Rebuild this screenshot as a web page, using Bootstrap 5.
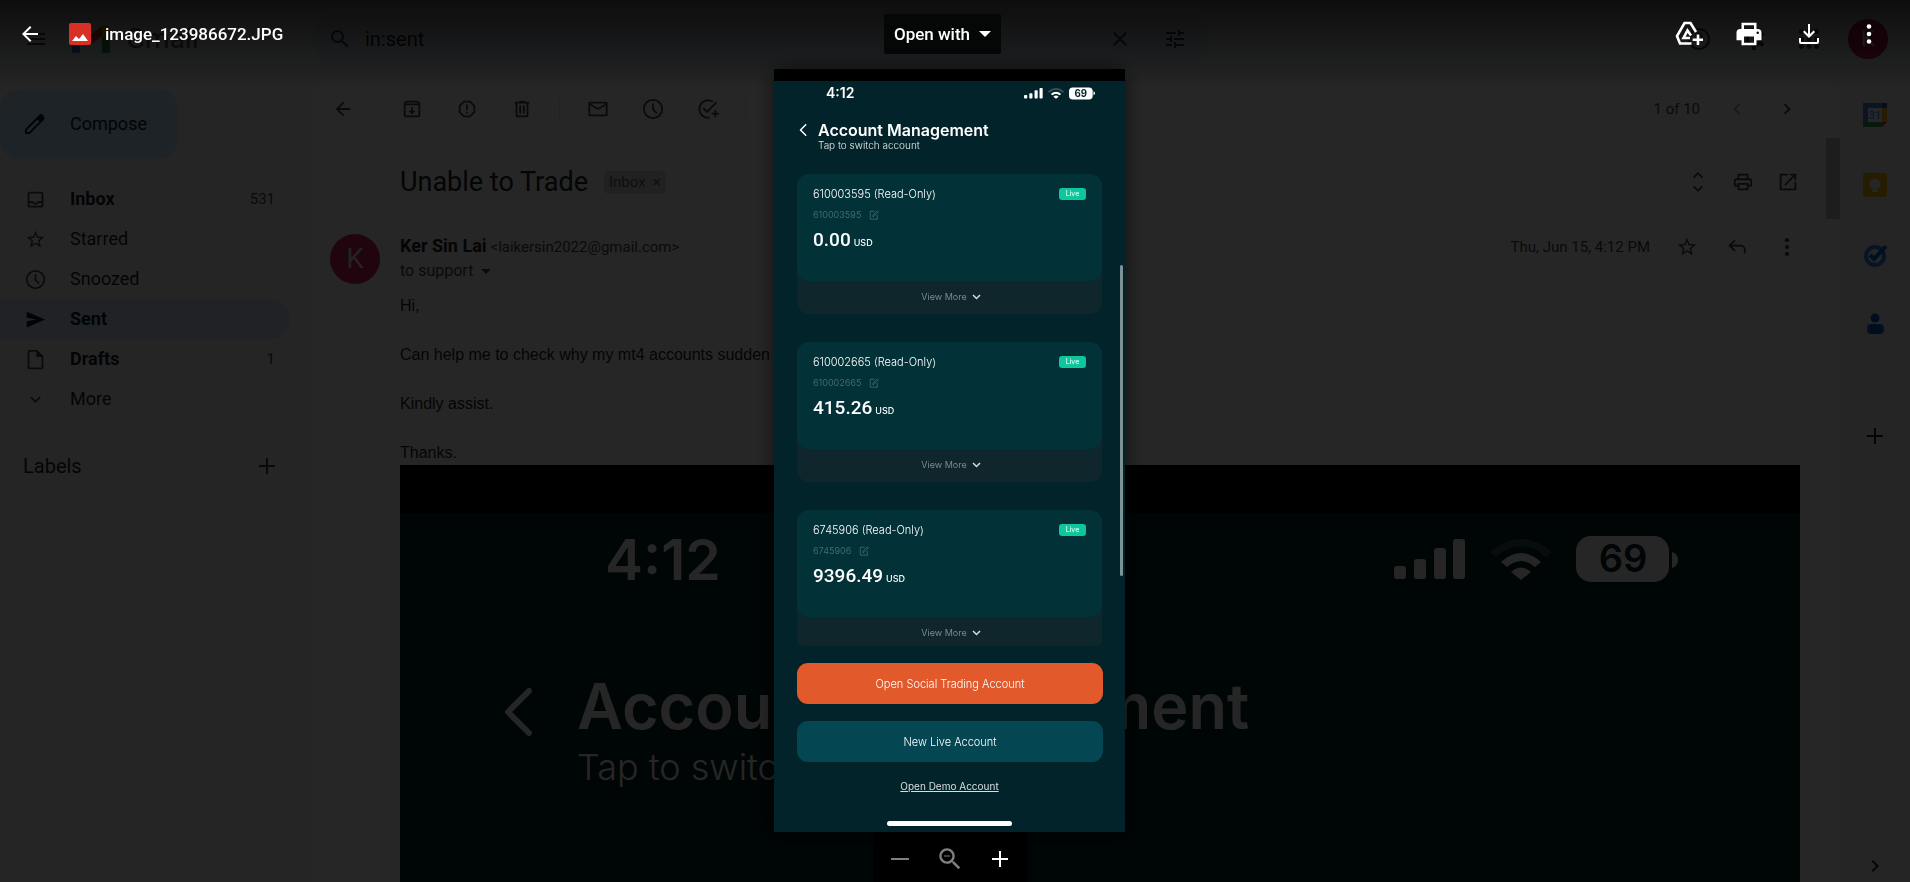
<!DOCTYPE html>
<html lang="en">
<head>
<meta charset="utf-8">
<meta name="viewport" content="width=device-width, initial-scale=1">
<title>image_123986672.JPG</title>
<link href="https://cdn.jsdelivr.net/npm/bootstrap@5.3.0/dist/css/bootstrap.min.css" rel="stylesheet">
<style>
  html, body { height: 100%; }
  body { overflow: hidden; background: #f6f8fc; color: #202124; font: 16px/24px Roboto, "Liberation Sans", sans-serif; }
  button { background: none; border: 0; padding: 0; color: inherit; font: inherit; }
  .ic { width: 24px; height: 24px; fill: currentColor; flex: none; display: block; }
  .slot { width: 55px; display: flex; justify-content: center; flex: none; }
  .slot-sm { width: 45px; }
  .slot-md { width: 50px; }
  .slot-lg { width: 60px; }
  .muted-ink { color: #444746; }

  /* mail page */
  .mail { height: 100vh; }
  .mail-head { height: 78px; flex: none; }
  .head-tools { padding-right: 22px; }
  .side-col { width: 313px; flex: none; }
  .logo-word { font-size: 28px; color: #5f6368; }
  .searchbar { height: 60px; width: 897px; border-radius: 30px; background: #eaf1fb; padding-left: 15px; gap: 13px; }
  .searchbar input { background: none; border: 0; font-size: 20px; color: #1f1f1f; padding: 0; min-width: 0; }
  .search-tools { display: flex; margin-right: 8px; }
  .face { border-radius: 50%; background: #d81b60; color: #fff; display: flex; align-items: center; justify-content: center; flex: none; }
  .face-sm { width: 40px; height: 40px; font-size: 22px; margin-left: 12px; }
  .face-lg { width: 50px; height: 50px; font-size: 28px; color: #e8e8e8; margin: 0 20px 0 17px; }
  .compose { width: 178px; height: 70px; border-radius: 20px; background: #c2e7ff; color: #001d35; font-size: 18px; padding-left: 23px; gap: 23px; margin: 11px 0 20px; }
  .folder { height: 40px; width: 290px; padding: 0 15px 0 25px; font-size: 18px; color: #1f1f1f; text-decoration: none; border-radius: 0 20px 20px 0; gap: 24px; }
  .folder .ic { width: 21px; height: 21px; color: #444746; }
  .folder .count { font-size: 15px; font-weight: 400; color: #444746; }
  .folder.on { background: #d3e3fd; color: #001d35; }
  .folder.on .ic { color: #001d35; }
  .labels { font-size: 20px; padding: 0 34px 0 23px; margin-top: 35px; height: 24px; }
  .thread { background: #fff; border-radius: 20px 20px 0 0; margin-top: 2px; overflow: hidden; }
  .thread .ic { width: 22px; height: 22px; }
  .bar { height: 58px; flex: none; padding: 0 28px 0 2px; }
  .bar .slot:first-child { margin-right: 14px; }
  .bar .rule { width: 1px; height: 25px; background: #e0e0e0; flex: none; margin: 0 10px; }
  .of-count { font-size: 15px; margin-right: 12px; }
  .thread-scroll { padding-right: 14px; }
  .thumb { width: 14px; height: 81px; background: #c1c1c1; flex: none; }
  .subject-row { padding: 26px 2px 34px 87px; gap: 16px; }
  .subject { font-size: 27px; line-height: 36px; margin: 0; font-weight: 400; }
  .chip { background: #ddd; border-radius: 5px; font-size: 15px; line-height: 23px; padding: 0 5px; color: #666; display: flex; gap: 7px; }
  .from-name { font-size: 18px; }
  .from-mail { font-size: 15px; }
  .sent-date { font-size: 15px; margin-right: 12px; }
  .letter { font: 16px/24px "Liberation Sans", Arial, sans-serif; color: #222; padding-top: 11px; }
  .letter p { margin: 0 0 25px; }
  .shot { background: #02232a; margin-right: 12px; color: #fff; font-family: Inter, sans-serif; font-weight: 600; padding-bottom: 300px; }
  .shot-strip { height: 48px; background: #000; }
  .shot-status { height: 93px; padding: 0 122px 0 205px; font-size: 57px; }
  .shot-chev { margin: 82px 0 0 104px; }
  .shot-title { font-size: 63px; line-height: 70px; margin: 65px 0 4px 45px; }
  .shot-sub { font-size: 36px; line-height: 44px; font-weight: 300; margin-left: 45px; }
  .rail { width: 70px; flex: none; padding-top: 2px; }
  .rail-rule { width: 24px; height: 1px; background: #e0e0e0; margin: 12px 0 51px; }

  /* attachment viewer */
  .viewer { position: fixed; inset: 0; background: rgba(0,0,0,.85); color: #fff; }
  .viewer::before { content: ""; position: absolute; inset: 0 0 auto 0; height: 88px; background: linear-gradient(rgba(0,0,0,.65), transparent); }
  .viewer-head { height: 69px; flex: none; position: relative; z-index: 2; padding-top: 14px; }
  .viewer-side { flex: 1 1 0; height: 40px; }
  .viewer-left { padding-left: 18px; }
  .viewer-right { padding-right: 11px; }
  .file-ic { margin: 0 14px 0 27px; }
  .viewer-head .name { font-size: 17px; font-weight: 500; }
  .open-with { width: 117px; height: 40px; background: #050606; border-radius: 2px; font-size: 17px; font-weight: 500; gap: 9px; margin-right: 32px; }
  .side-pad { padding-right: 11px; }
  .zoombar { width: 154px; height: 54px; background: #000; }
  .phone { width: 351px; background: #02232a; font-family: Inter, sans-serif; box-shadow: 0 0 20px rgba(0,0,0,.6); position: relative; }
  .phone-strip { height: 12px; background: #000; }
  .status { height: 24px; padding: 0 30px 0 52px; font-size: 14px; font-weight: 600; }
  .ph-head { padding: 16px 0 0 25px; gap: 11px; }
  .ph-back { height: 18px; }
  .ph-back svg { display: block; }
  .ph-title { font-size: 16px; line-height: 18px; font-weight: 600; margin: 0; }
  .ph-sub { font-size: 10px; line-height: 12px; margin: 0; color: #e6eced; font-weight: 300; }
  .ph-body { padding: 23px 22px 0 23px; }
  .acct { background: #0f262c; border-radius: 12px; height: 140px; margin: 0 1px 28px 0; }
  .acct.cut { height: 136px; border-radius: 12px 12px 6px 6px; margin-bottom: 17px; }
  .acct-in { background: #033138; border-radius: 12px; height: 107px; padding: 12px 16px 0; }
  .acct-name { font-size: 11px; line-height: 16px; font-weight: 300; margin: 0; color: #fff; }
  .acct-id { font-size: 9px; line-height: 14px; color: #456a70; margin-top: 6px; gap: 8px; }
  .acct-amt { font: 500 19px/24px Roboto, sans-serif; margin-top: 6px; display: flex; align-items: baseline; gap: 3px; }
  .acct-amt span { font-family: Inter, sans-serif; font-size: 9px; }
  .live { background: #0fc79c; border-radius: 3px; width: 27px; height: 12px; font-size: 7px; line-height: 12px; text-align: center; }
  .more { height: 32px; width: 100%; font-size: 9px; color: #7b8a8d; gap: 5px; padding-left: 3px; }
  .ph-btn { height: 41px; border-radius: 11px; font-size: 11px; font-weight: 300; width: 306px; display: block; }
  .ph-btn.orange { background: #e2592b; }
  .ph-btn.teal { background: #044753; margin-top: 17px; }
  .demo { font-size: 10px; line-height: 14px; color: #d9dfe0; margin-top: 17px; }
  .home { width: 125px; height: 5px; border-radius: 3px; background: #fff; margin: 28px 0 6px; }
  .ph-thumb { position: absolute; right: 2px; top: 196px; width: 3px; height: 311px; border-radius: 2px; background: #7b9296; }
</style>
</head>
<body>
<svg width="0" height="0" class="position-absolute">
  <symbol id="back" viewBox="0 0 24 24"><path d="M20 11H7.830l5.590-5.590L12 4l-8 8 8 8 1.410-1.410L7.830 13H20z"/></symbol>
  <symbol id="menu" viewBox="0 0 24 24"><path d="M3 18h18v-2H3zm0-5h18v-2H3zm0-7v2h18V6z"/></symbol>
  <symbol id="search" viewBox="0 0 24 24"><path d="M15.500 14h-.79l-.28-.27A6.470 6.470 0 0 0 16 9.500 6.500 6.500 0 1 0 9.500 16c1.610 0 3.090-.59 4.230-1.570l.27.28v.79l5 4.990L20.490 19zm-6 0a4.500 4.500 0 1 1 0-9 4.500 4.500 0 0 1 0 9z"/></symbol>
  <symbol id="zoomout" viewBox="2 2 20 20"><path d="M15.500 14h-.79l-.28-.27A6.470 6.470 0 0 0 16 9.500 6.500 6.500 0 1 0 9.500 16c1.610 0 3.090-.59 4.230-1.570l.27.28v.79l5 4.990L20.490 19zm-6 0a4.500 4.500 0 1 1 0-9 4.500 4.500 0 0 1 0 9zM7 9h5v1H7z"/></symbol>
  <symbol id="close" viewBox="0 0 24 24"><path d="M19 6.410 17.590 5 12 10.590 6.410 5 5 6.410 10.590 12 5 17.590 6.410 19 12 13.410 17.590 19 19 17.590 13.410 12z"/></symbol>
  <symbol id="tune" viewBox="0 0 24 24"><path d="M3 17v2h6v-2zM3 5v2h10V5zm10 16v-2h8v-2h-8v-2h-2v6zM7 9v2H3v2h4v2h2V9zm14 4v-2H11v2zm-6-4h2V7h4V5h-4V3h-2z"/></symbol>
  <symbol id="pen" viewBox="0 0 24 24"><path d="M20.700 5.200a1 1 0 0 0 0-1.400l-1-1a2.400 2.400 0 0 0-3.300 0L2 17.200V22h4.800L21.200 7.600a2 2 0 0 0-.5-2.400zM6 20H4v-2L14.500 7.500l2 2z"/></symbol>
  <symbol id="inbox" viewBox="0 0 24 24"><path d="M19 3H5a2 2 0 0 0-2 2v14c0 1.100.9 2 2 2h14a2 2 0 0 0 2-2V5a2 2 0 0 0-2-2zm0 16H5v-3h3.560a4 4 0 0 0 6.880 0H19zm0-5h-5a2 2 0 0 1-4 0H5V5h14z"/></symbol>
  <symbol id="star" viewBox="0 0 24 24"><path d="m22 9.240-7.190-.62L12 2 9.190 8.630 2 9.240l5.460 4.730L5.820 21 12 17.270 18.180 21l-1.630-7.030zM12 15.400l-3.760 2.270 1-4.280-3.320-2.880 4.380-.38L12 6.100l1.710 4.040 4.380.38-3.320 2.880 1 4.280z"/></symbol>
  <symbol id="clock" viewBox="0 0 24 24"><path d="M12 1a11 11 0 1 0 0 22 11 11 0 0 0 0-22zm0 20a9 9 0 1 1 0-18 9 9 0 0 1 0 18zm-1-15h2v6l4 4-1.400 1.400L11 12.800z"/></symbol>
  <symbol id="send" viewBox="0 0 24 24"><path d="M2 21 23 12 2 3v7l11 2-11 2z"/></symbol>
  <symbol id="draft" viewBox="0 0 24 24"><path d="M14 1H5a2 2 0 0 0-2 2v18c0 1.100.9 2 2 2h14a2 2 0 0 0 2-2V8zm5 20H5V3h8v6h6z"/></symbol>
  <symbol id="down" viewBox="0 0 24 24"><path d="M16.590 8.590 12 13.170 7.410 8.590 6 10l6 6 6-6z"/></symbol>
  <symbol id="left" viewBox="0 0 24 24"><path d="M15.410 7.410 14 6l-6 6 6 6 1.410-1.410L10.830 12z"/></symbol>
  <symbol id="right" viewBox="0 0 24 24"><path d="M8.590 16.590 13.170 12 8.590 7.410 10 6l6 6-6 6z"/></symbol>
  <symbol id="plus" viewBox="0 0 24 24"><path d="M20 13h-7v7h-2v-7H4v-2h7V4h2v7h7z"/></symbol>
  <symbol id="minus" viewBox="0 0 24 24"><path d="M3 11h18v2H3z"/></symbol>
  <symbol id="archive" viewBox="0 0 24 24"><path d="m20.500 5.200-1.400-1.700A1.500 1.500 0 0 0 18 3H6c-.5 0-.9.200-1.200.5L3.500 5.200C3.200 5.600 3 6 3 6.500V19c0 1.100.9 2 2 2h14a2 2 0 0 0 2-2V6.500c0-.5-.2-.9-.5-1.300zM6.200 5h11.600l.8 1H5.400zM5 19V8h14v11zm8-9h-2v4H8l4 4 4-4h-3z"/></symbol>
  <symbol id="spam" viewBox="0 0 24 24"><path d="M15.700 3H8.300L3 8.300v7.400L8.300 21h7.400l5.300-5.300V8.300zM19 14.900 14.900 19H9.100L5 14.900V9.100L9.100 5h5.800L19 9.100zM11 7h2v6h-2zm0 8h2v2h-2z"/></symbol>
  <symbol id="trash" viewBox="0 0 24 24"><path d="M15 4V3H9v1H4v2h1v13c0 1.100.9 2 2 2h10a2 2 0 0 0 2-2V6h1V4zm2 15H7V6h10zM9 8h2v9H9zm4 0h2v9h-2z"/></symbol>
  <symbol id="mail" viewBox="0 0 24 24"><path d="M21 4H3a1.500 1.500 0 0 0-1.500 1.500v13A1.500 1.500 0 0 0 3 20h18a1.500 1.500 0 0 0 1.500-1.500v-13A1.500 1.500 0 0 0 21 4zm-.5 14h-17V8l8.500 5 8.500-5zM12 11 3.500 6h17z"/></symbol>
  <symbol id="task" viewBox="0 0 24 24"><path d="M12 20.500A8.500 8.500 0 1 1 16.500 4.700l1.400-1.400A10.500 10.500 0 1 0 14 22.300l-.5-2zM20.500 4 11 13.500 7.500 10 6 11.500l5 5L22 5.500zM19 13v3h-3v2h3v3h2v-3h3v-2h-3v-3z"/></symbol>
  <symbol id="unfold" viewBox="0 0 24 24"><path d="M12 3.800 16.200 8l1.400-1.400L12 1 6.400 6.600 7.800 8zm0 16.400L7.800 16l-1.400 1.400L12 23l5.600-5.600-1.400-1.400z"/></symbol>
  <symbol id="printline" viewBox="0 0 24 24"><path d="M19 8h-1V3H6v5H5a3 3 0 0 0-3 3v6h4v4h12v-4h4v-6a3 3 0 0 0-3-3zM8 5h8v3H8zm8 14H8v-4h8zm2-4v-2H6v2H4v-4c0-.6.4-1 1-1h14c.6 0 1 .4 1 1v4z"/></symbol>
  <symbol id="print" viewBox="0 0 24 24"><path fill-rule="evenodd" d="M19 8h-1V3H6v5H5a3 3 0 0 0-3 3v6h4v4h12v-4h4v-6a3 3 0 0 0-3-3zM8 5h8v3H8zm8 14H8v-5h8zm3-7a1 1 0 1 1 0-2 1 1 0 0 1 0 2z"/></symbol>
  <symbol id="open" viewBox="0 0 24 24"><path d="M19 19H5V5h7V3H3v18h18v-9h-2zM14 3v2h3.600L8 14.600 9.400 16 19 6.400V10h2V3z"/></symbol>
  <symbol id="reply" viewBox="0 0 24 24"><path d="M9 4 2.500 10.500 9 17l1.400-1.400L6.300 11.500H16a3.500 3.500 0 0 1 3.500 3.500v4h2v-4A5.500 5.500 0 0 0 16 9.500H6.300l4.100-4.100z"/></symbol>
  <symbol id="dots" viewBox="0 0 24 24"><circle cx="12" cy="4.500" r="2.300"/><circle cx="12" cy="12" r="2.300"/><circle cx="12" cy="19.500" r="2.300"/></symbol>
  <symbol id="help" viewBox="0 0 24 24"><circle cx="12" cy="12" r="10" fill="none" stroke="currentColor" stroke-width="2"/><path d="M11 16h2v2h-2zM8 10a4 4 0 1 1 6.500 3c-1 .8-1.500 1-1.500 2h-2c0-2 .8-2.500 1.900-3.400A2 2 0 1 0 10 10z"/></symbol>
  <symbol id="gear" viewBox="0 0 24 24"><circle cx="12" cy="12" r="6.500" fill="none" stroke="currentColor" stroke-width="3"/><path d="M10 1h4v4h-4zm0 18h4v4h-4zM1.500 7.800l2-3.500L7 6.300l-2 3.500zM17 17.700l2-3.500 3.500 2-2 3.500zM19 9.800l-2-3.500 3.500-2 2 3.500zM5 14.200l2 3.500-3.500 2-2-3.500z"/></symbol>
  <symbol id="apps" viewBox="0 0 24 24"><circle cx="4.500" cy="4.500" r="2.500"/><circle cx="12" cy="4.500" r="2.500"/><circle cx="19.500" cy="4.500" r="2.500"/><circle cx="4.500" cy="12" r="2.500"/><circle cx="12" cy="12" r="2.500"/><circle cx="19.500" cy="12" r="2.500"/><circle cx="4.500" cy="19.500" r="2.500"/><circle cx="12" cy="19.500" r="2.500"/><circle cx="19.500" cy="19.500" r="2.500"/></symbol>
  <symbol id="download" viewBox="0 0 24 24"><path d="M12 16 6 10l1.400-1.500L11 12.100V2h2v10.100l3.600-3.600L18 10zM2 16h2v4h16v-4h2v4a2 2 0 0 1-2 2H4a2 2 0 0 1-2-2z"/></symbol>
  <symbol id="drive" viewBox="0 0 28 26"><path d="M21 11 15.500 2h-6L2 15l3 7.500h11.500M15 17H8.500l4-7.500 3.500 5" fill="none" stroke="currentColor" stroke-width="2.600"/><path d="M21.700 13.500h2.600v4h4v2.600h-4v4h-2.600v-4h-4v-2.600h4z"/></symbol>
  <symbol id="caret" viewBox="0 0 12 6"><path d="M0 0h12L6 6z"/></symbol>
  <symbol id="edit" viewBox="0 0 12 12"><path d="M7 1.500H1.500v9.500H10V6M4.500 8l.4-2L10 1l1.300 1.300-5 5z" fill="none" stroke="currentColor"/></symbol>
  <symbol id="signal" viewBox="0 0 72 42"><rect y="27" width="12" height="13" rx="3"/><rect x="20" y="20" width="12" height="20" rx="3"/><rect x="40" y="9" width="12" height="31" rx="3"/><rect x="59" width="12" height="40" rx="3"/></symbol>
  <symbol id="wifi" viewBox="0 0 62 42"><path d="M0 13Q31-13 62 13L56 18Q31-4 6 18z" opacity=".22"/><path d="M11 23Q31 5 51 23L45 28Q31 16 17 28z"/><path d="M21 33Q31 24 41 33L31 41z"/></symbol>
  <symbol id="chev" viewBox="0 0 28 48"><path d="M25 3 4 24 25 45" fill="none" stroke="currentColor" stroke-width="6" stroke-linecap="round" stroke-linejoin="round"/></symbol>
  <symbol id="more-chev" viewBox="0 0 9 6"><path d="m1 1 3.500 3.500L8 1" fill="none" stroke="#d5dcdd" stroke-width="1.500"/></symbol>
</svg>

<div class="mail d-flex flex-column">
  <header class="mail-head d-flex align-items-center">
    <div class="side-col d-flex align-items-center">
      <button class="ms-4" aria-label="Main menu"><svg class="ic muted-ink"><use href="#menu"/></svg></button>
      <svg width="38" height="28" viewBox="0 0 38 28" class="ms-4"><path d="M0 4v24h8V12z" fill="#4285f4"/><path d="M38 4v24h-8V12z" fill="#34a853"/><path d="M0 4C0 0 5-2 8 1l11 8 11-8v10L19 19 8 11z" fill="#ea4335"/><path d="M30 1c3-3 8-1 8 3v2l-8 6z" fill="#fbbc04"/></svg>
      <span class="logo-word ms-3">Gmail</span>
    </div>
    <form class="searchbar d-flex align-items-center">
      <svg class="ic muted-ink"><use href="#search"/></svg>
      <input class="flex-grow-1" type="text" value="in:sent" aria-label="Search mail">
      <div class="search-tools muted-ink">
        <button type="button" class="slot" aria-label="Clear search"><svg class="ic"><use href="#close"/></svg></button>
        <button type="button" class="slot" aria-label="Search options"><svg class="ic"><use href="#tune"/></svg></button>
      </div>
    </form>
    <div class="head-tools d-flex align-items-center ms-auto muted-ink">
      <button class="slot" aria-label="Support"><svg class="ic"><use href="#help"/></svg></button>
      <button class="slot" aria-label="Settings"><svg class="ic"><use href="#gear"/></svg></button>
      <button class="slot" aria-label="Google apps"><svg class="ic"><use href="#apps"/></svg></button>
      <span class="face face-sm">K</span>
    </div>
  </header>

  <div class="d-flex flex-grow-1 overflow-hidden">
    <nav class="side-col">
      <button class="compose d-flex align-items-center"><svg class="ic"><use href="#pen"/></svg>Compose</button>
      <a href="#" class="folder d-flex align-items-center fw-bold"><svg class="ic"><use href="#inbox"/></svg>Inbox<span class="count ms-auto">531</span></a>
      <a href="#" class="folder d-flex align-items-center"><svg class="ic"><use href="#star"/></svg>Starred</a>
      <a href="#" class="folder d-flex align-items-center"><svg class="ic"><use href="#clock"/></svg>Snoozed</a>
      <a href="#" class="folder on d-flex align-items-center fw-bold"><svg class="ic"><use href="#send"/></svg>Sent</a>
      <a href="#" class="folder d-flex align-items-center fw-bold"><svg class="ic"><use href="#draft"/></svg>Drafts<span class="count ms-auto">1</span></a>
      <a href="#" class="folder d-flex align-items-center"><svg class="ic"><use href="#down"/></svg>More</a>
      <div class="labels d-flex align-items-center justify-content-between">Labels<button class="muted-ink" aria-label="Create new label"><svg class="ic"><use href="#plus"/></svg></button></div>
    </nav>

    <main class="thread flex-grow-1 d-flex flex-column">
      <div class="bar d-flex align-items-center muted-ink">
        <button class="slot" aria-label="Back to Sent"><svg class="ic"><use href="#back"/></svg></button>
        <button class="slot" aria-label="Archive"><svg class="ic"><use href="#archive"/></svg></button>
        <button class="slot" aria-label="Report spam"><svg class="ic"><use href="#spam"/></svg></button>
        <button class="slot" aria-label="Delete"><svg class="ic"><use href="#trash"/></svg></button>
        <span class="rule"></span>
        <button class="slot" aria-label="Mark as unread"><svg class="ic"><use href="#mail"/></svg></button>
        <button class="slot" aria-label="Snooze"><svg class="ic"><use href="#clock"/></svg></button>
        <button class="slot" aria-label="Add to Tasks"><svg class="ic"><use href="#task"/></svg></button>
        <span class="rule"></span>
        <span class="of-count ms-auto">1 of 10</span>
        <button class="slot slot-md opacity-50" aria-label="Newer"><svg class="ic"><use href="#left"/></svg></button>
        <button class="slot slot-md" aria-label="Older"><svg class="ic"><use href="#right"/></svg></button>
      </div>
      <div class="d-flex flex-grow-1 overflow-hidden">
        <div class="thread-scroll flex-grow-1">
          <div class="subject-row d-flex align-items-center">
            <h2 class="subject">Unable to Trade</h2>
            <span class="chip">Inbox <button aria-label="Remove label">×</button></span>
            <div class="d-flex ms-auto muted-ink">
              <button class="slot slot-sm" aria-label="Expand all"><svg class="ic"><use href="#unfold"/></svg></button>
              <button class="slot slot-sm" aria-label="Print all"><svg class="ic"><use href="#printline"/></svg></button>
              <button class="slot slot-sm" aria-label="In new window"><svg class="ic"><use href="#open"/></svg></button>
            </div>
          </div>
          <div class="d-flex">
            <span class="face face-lg">K</span>
            <div class="flex-grow-1">
              <div class="d-flex align-items-center">
                <div><strong class="from-name">Ker Sin Lai</strong> <span class="from-mail muted-ink">&lt;laikersin2022@gmail.com&gt;</span></div>
                <div class="d-flex align-items-center ms-auto muted-ink">
                  <span class="sent-date">Thu, Jun 15, 4:12 PM</span>
                  <button class="slot slot-md" aria-label="Star"><svg class="ic"><use href="#star"/></svg></button>
                  <button class="slot slot-md" aria-label="Reply"><svg class="ic"><use href="#reply"/></svg></button>
                  <button class="slot slot-md" aria-label="More"><svg class="ic"><use href="#dots"/></svg></button>
                </div>
              </div>
              <div class="muted-ink d-flex align-items-center gap-2">to support <svg width="10" height="5" fill="currentColor"><use href="#caret"/></svg></div>
              <div class="letter">
                <p>Hi,</p>
                <p>Can help me to check why my mt4 accounts sudden</p>
                <p>Kindly assist.</p>
                <div>Thanks.</div>
                <div class="shot">
                  <div class="shot-strip"></div>
                  <div class="shot-status d-flex align-items-center">4:12
                    <svg class="ms-auto" width="72" height="44" fill="#fff"><use href="#signal"/></svg>
                    <svg class="ms-4" width="62" height="44" fill="#fff"><use href="#wifi"/></svg>
                    <svg class="ms-4" width="102" height="48" viewBox="0 0 102 48" fill="#fff"><rect width="93" height="46" rx="15"/><path d="M96 16q6 2 6 8t-6 8z"/><text x="47" y="36" font-size="38" font-weight="600" text-anchor="middle" fill="#02232a">69</text></svg>
                  </div>
                  <div class="d-flex align-items-start">
                    <svg class="shot-chev" width="28" height="48"><use href="#chev"/></svg>
                    <div>
                      <div class="shot-title">Account Management</div>
                      <div class="shot-sub">Tap to switch account</div>
                    </div>
                  </div>
                </div>
              </div>
            </div>
          </div>
        </div>
        <div class="thumb"></div>
      </div>
    </main>

    <aside class="rail d-flex flex-column align-items-center">
      <button aria-label="Calendar"><svg class="d-block" width="24" height="70" viewBox="0 -23 24 70"><path d="M0 0h19v5H5v14H0z" fill="#4285f4"/><path d="M19 0h5v5h-5z" fill="#1967d2"/><path d="M19 5h5v14h-5z" fill="#fbbc04"/><path d="M0 19h19v5H0z" fill="#34a853"/><path d="M19 19h5l-5 5z" fill="#ea4335"/><path d="M5 5h14v14H5z" fill="#fff"/><text x="12" y="16" text-anchor="middle" font-size="11" fill="#4285f4">31</text></svg></button>
      <button aria-label="Keep"><svg class="d-block" width="24" height="70" viewBox="0 -23 24 70"><rect width="24" height="24" rx="2" fill="#fbbc04"/><circle cx="12" cy="11" r="5.500" fill="#fff"/><path d="M9 17h6v2H9z" fill="#fff"/></svg></button>
      <button aria-label="Tasks"><svg class="d-block" width="24" height="70" viewBox="0 -23 24 70"><circle cx="12" cy="13" r="9" fill="none" stroke="#2684fc" stroke-width="4"/><path d="m7 12 4 4L23 3" fill="none" stroke="#0066da" stroke-width="4"/></svg></button>
      <button aria-label="Contacts"><svg class="d-block" width="24" height="70" viewBox="0 -23 24 70"><circle cx="12" cy="5" r="4.500" fill="#0057cc"/><rect x="4" y="11" width="17" height="10" rx="4" fill="#2a6fdf"/><rect x="7" y="11" width="11" height="10" rx="3" fill="#0057cc"/></svg></button>
      <div class="rail-rule"></div>
      <button aria-label="Get add-ons"><svg class="ic"><use href="#plus"/></svg></button>
      <button class="mt-auto mb-1" aria-label="Hide side panel"><svg class="ic"><use href="#right"/></svg></button>
    </aside>
  </div>
</div>

<div class="viewer d-flex flex-column" role="dialog" aria-label="Attachment preview">
  <div class="viewer-head d-flex align-items-start">
    <div class="viewer-side viewer-left d-flex align-items-center">
      <button aria-label="Close"><svg class="ic"><use href="#back"/></svg></button>
      <svg class="file-ic" width="22" height="22" viewBox="0 0 22 22"><rect width="22" height="22" rx="2" fill="#d93025"/><path d="M3 18l4-5 3 3 4-5 5 7z" fill="#fff"/></svg>
      <span class="name">image_123986672.JPG</span>
    </div>
    <button class="open-with d-flex align-items-center justify-content-center">Open with <svg width="12" height="6" fill="#fff"><use href="#caret"/></svg></button>
    <div class="viewer-side viewer-right d-flex align-items-center justify-content-end">
      <button class="slot slot-lg" aria-label="Add to Drive"><svg width="28" height="26" fill="#fff"><use href="#drive"/></svg></button>
      <button class="slot slot-lg" aria-label="Print"><svg width="30" height="30" fill="#fff"><use href="#print"/></svg></button>
      <button class="slot slot-lg" aria-label="Download"><svg class="ic"><use href="#download"/></svg></button>
      <button class="slot slot-lg" aria-label="More actions"><svg class="ic"><use href="#dots"/></svg></button>
    </div>
  </div>

  <div class="side-pad d-flex flex-column align-items-center">
    <section class="phone" aria-label="Account Management">
      <div class="phone-strip"></div>
      <div class="status d-flex align-items-center">4:12
        <svg class="ms-auto" width="19" height="11" fill="#fff"><use href="#signal"/></svg>
        <svg class="ms-1" width="18" height="11" fill="#fff"><use href="#wifi"/></svg>
        <svg class="ms-1" width="26" height="13" viewBox="0 0 102 48" fill="#fff"><rect width="93" height="48" rx="15"/><path d="M96 15q6 2 6 8t-6 8z"/><text x="46" y="37" font-size="38" font-weight="700" text-anchor="middle" fill="#02232a">69</text></svg>
      </div>
      <div class="ph-head d-flex">
        <button class="ph-back" aria-label="Back"><svg width="8" height="12"><use href="#chev"/></svg></button>
        <div>
          <h1 class="ph-title">Account Management</h1>
          <p class="ph-sub">Tap to switch account</p>
        </div>
      </div>
      <div class="ph-body">
        <article class="acct">
          <div class="acct-in">
            <div class="d-flex justify-content-between align-items-center"><h2 class="acct-name">610003595 (Read-Only)</h2><span class="live">Live</span></div>
            <div class="acct-id d-flex align-items-center">610003595 <button aria-label="Rename"><svg class="d-block" width="10" height="10"><use href="#edit"/></svg></button></div>
            <div class="acct-amt">0.00 <span>USD</span></div>
          </div>
          <button class="more d-flex align-items-center justify-content-center">View More <svg width="9" height="6"><use href="#more-chev"/></svg></button>
        </article>
        <article class="acct">
          <div class="acct-in">
            <div class="d-flex justify-content-between align-items-center"><h2 class="acct-name">610002665 (Read-Only)</h2><span class="live">Live</span></div>
            <div class="acct-id d-flex align-items-center">610002665 <button aria-label="Rename"><svg class="d-block" width="10" height="10"><use href="#edit"/></svg></button></div>
            <div class="acct-amt">415.26 <span>USD</span></div>
          </div>
          <button class="more d-flex align-items-center justify-content-center">View More <svg width="9" height="6"><use href="#more-chev"/></svg></button>
        </article>
        <article class="acct cut">
          <div class="acct-in">
            <div class="d-flex justify-content-between align-items-center"><h2 class="acct-name">6745906 (Read-Only)</h2><span class="live">Live</span></div>
            <div class="acct-id d-flex align-items-center">6745906 <button aria-label="Rename"><svg class="d-block" width="10" height="10"><use href="#edit"/></svg></button></div>
            <div class="acct-amt">9396.49 <span>USD</span></div>
          </div>
          <button class="more d-flex align-items-center justify-content-center">View More <svg width="9" height="6"><use href="#more-chev"/></svg></button>
        </article>
        <button class="ph-btn orange">Open Social Trading Account</button>
        <button class="ph-btn teal">New Live Account</button>
      </div>
      <div class="d-flex flex-column align-items-center">
        <a href="#" class="demo">Open Demo Account</a>
        <span class="home"></span>
      </div>
      <span class="ph-thumb"></span>
    </section>
    <div class="zoombar d-flex align-items-center justify-content-center">
      <button class="slot slot-md opacity-50" aria-label="Zoom out"><svg class="ic"><use href="#minus"/></svg></button>
      <button class="slot slot-md opacity-50" aria-label="Fit to page"><svg class="ic"><use href="#zoomout"/></svg></button>
      <button class="slot slot-md" aria-label="Zoom in"><svg class="ic"><use href="#plus"/></svg></button>
    </div>
  </div>
</div>
<script src="https://cdn.jsdelivr.net/npm/bootstrap@5.3.0/dist/js/bootstrap.bundle.min.js"></script>
</body>
</html>
